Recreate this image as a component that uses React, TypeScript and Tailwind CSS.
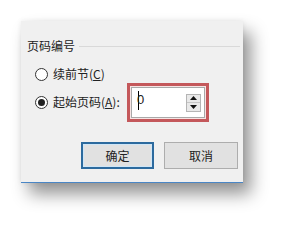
import React from "react";

function Radio({ checked }: { checked?: boolean }) {
  return (
    <div className="w-[13px] h-[13px] rounded-full border border-[#333] bg-white flex items-center justify-center shrink-0">
      {checked && <div className="w-[7px] h-[7px] rounded-full bg-[#222]" />}
    </div>
  );
}

function Spinner() {
  return (
    <div className="flex flex-col w-[15px] h-[18px] border border-[#b5b5b5] bg-[#e9e9e9]">
      <div className="flex-1 flex items-center justify-center border-b border-[#c6c6c6]">
        <svg width="7" height="4" viewBox="0 0 7 4">
          <path d="M3.5 0 L7 4 L0 4 Z" fill="#111" />
        </svg>
      </div>
      <div className="flex-1 flex items-center justify-center">
        <svg width="7" height="4" viewBox="0 0 7 4">
          <path d="M0 0 L7 0 L3.5 4 Z" fill="#111" />
        </svg>
      </div>
    </div>
  );
}

export default function App() {
  return (
    <div
      className="w-[287px] h-[226px] bg-white overflow-hidden pt-[21px] pl-[21px] text-[#222]"
      style={{ fontFamily: '"Noto Sans CJK SC", "Liberation Sans", sans-serif' }}
    >
      <div className="w-[222px] h-[162px] bg-[#f0f0f0] border-b border-[#4a86c5] shadow-[8px_11px_16px_rgba(0,0,0,0.42),0_0_5px_rgba(0,0,0,0.08)] flex flex-col pt-[17px] pl-[6px]">
        {/* Group title */}
        <div className="flex items-center h-[16px]">
          <span className="text-[12px] leading-[16px]">页码编号</span>
          <div className="flex-1 h-px bg-[#d9d9d9] ml-[4px] mr-[3px]" />
        </div>

        {/* Continue from previous section */}
        <div className="flex items-center h-[16px] mt-[12px] ml-[8px]">
          <Radio />
          <span className="text-[12px] leading-[16px] ml-[5px]">
            续前节(<span className="underline">C</span>)
          </span>
        </div>

        {/* Start at */}
        <div className="flex items-center h-[39px] mt-[1px] ml-[8px]">
          <Radio checked />
          <span className="text-[12px] leading-[16px] ml-[5px] w-[74px] -mt-[2px]">
            起始页码(<span className="underline">A</span>):
          </span>
          <div className="w-[82px] h-[39px] border-[3px] border-[#c4585b] bg-[#f6e4e4] p-px flex">
            <div className="relative flex-1 bg-white border border-[#a9a9a9] flex items-center justify-end pr-[3px]">
              <span className="absolute left-[6px] top-[3px] w-px h-[19px] bg-black" />
              <span
                className="absolute left-[5px] top-[4px] text-[13px] leading-[16px]"
                style={{ fontFamily: '"Liberation Sans", sans-serif' }}
              >
                0
              </span>
              <Spinner />
            </div>
          </div>
        </div>

        {/* Buttons */}
        <div className="flex justify-end gap-[10px] mt-[20px] pr-[5px]">
          <button className="w-[73px] h-[27px] bg-[#e1e1e1] border-2 border-[#2c6a9e] text-[12px] flex items-center justify-center">
            <span className="border border-[#cfe6f7] w-full h-full flex items-center justify-center">确定</span>
          </button>
          <button className="w-[74px] h-[27px] bg-[#e1e1e1] border border-[#adadad] text-[12px] flex items-center justify-center">
            取消
          </button>
        </div>
      </div>
    </div>
  );
}
